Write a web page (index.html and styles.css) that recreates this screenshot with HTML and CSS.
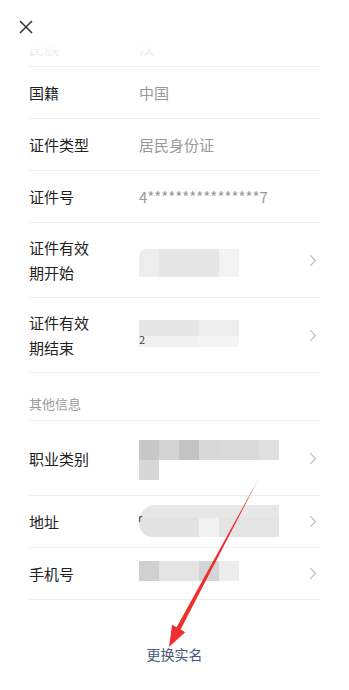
FILE: index.html
```html
<!DOCTYPE html>
<html lang="zh">
<head>
<meta charset="utf-8">
<title>实名信息</title>
<link rel="stylesheet" href="styles.css">
</head>
<body>
<div class="page">
  <div class="list">
    <div class="row ghost"><span class="label">民族</span><span class="value">汉</span></div>
    <div class="row"><span class="label">国籍</span><span class="value">中国</span></div>
    <div class="row"><span class="label">证件类型</span><span class="value">居民身份证</span></div>
    <div class="row"><span class="label">证件号</span><span class="value">4****************7</span></div>
    <div class="row tall">
      <span class="label wrap">证件有效期开始</span>
      <span class="value"><span class="blur b-start"></span></span>
      <svg class="chev" width="8" height="13" viewBox="0 0 8 13"><path d="M1.2 1.2 L6.5 6.5 L1.2 11.8" fill="none" stroke="#bdbdbd" stroke-width="1.2"/></svg>
    </div>
    <div class="row tall">
      <span class="label wrap">证件有效期结束</span>
      <span class="value"><span class="glyph g-two">2</span><span class="blur b-end"></span></span>
      <svg class="chev" width="8" height="13" viewBox="0 0 8 13"><path d="M1.2 1.2 L6.5 6.5 L1.2 11.8" fill="none" stroke="#bdbdbd" stroke-width="1.2"/></svg>
    </div>
    <div class="section">其他信息</div>
    <div class="row tall">
      <span class="label">职业类别</span>
      <span class="value"><span class="blur b-job"></span><span class="blur b-job2"></span></span>
      <svg class="chev" width="8" height="13" viewBox="0 0 8 13"><path d="M1.2 1.2 L6.5 6.5 L1.2 11.8" fill="none" stroke="#bdbdbd" stroke-width="1.2"/></svg>
    </div>
    <div class="row">
      <span class="label">地址</span>
      <span class="value"><span class="glyph g-r">r</span><span class="blur b-addr"></span></span>
      <svg class="chev" width="8" height="13" viewBox="0 0 8 13"><path d="M1.2 1.2 L6.5 6.5 L1.2 11.8" fill="none" stroke="#bdbdbd" stroke-width="1.2"/></svg>
    </div>
    <div class="row">
      <span class="label">手机号</span>
      <span class="value"><span class="blur b-phone"></span></span>
      <svg class="chev" width="8" height="13" viewBox="0 0 8 13"><path d="M1.2 1.2 L6.5 6.5 L1.2 11.8" fill="none" stroke="#bdbdbd" stroke-width="1.2"/></svg>
    </div>
  </div>
  <div class="action">更换实名</div>

  <div class="header">
    <svg class="close" width="14" height="14" viewBox="0 0 14 14"><path d="M1 1 L13 13 M13 1 L1 13" stroke="#333" stroke-width="1.5" fill="none"/></svg>
  </div>

  <svg class="arrow" width="349" height="690" viewBox="0 0 349 690">
    <polygon points="258.5,479 180.6,629.6 185.2,632.3 169,647 172.1,624.8 176.6,627.3" fill="#ee2f2f"/>
  </svg>
</div>
</body>
</html>
```

FILE: styles.css
```css
html, body {
  margin: 0;
  padding: 0;
  background: #fff;
}
body {
  font-family: "Noto Sans CJK SC", "Noto Sans", sans-serif;
}
.page {
  position: relative;
  width: 349px;
  height: 690px;
  padding-top: 15px;
  box-sizing: border-box;
  overflow: hidden;
  background: #fff;
}
.list {
  margin: 0 29px;
}
.row {
  display: flex;
  align-items: center;
  padding: 13px 0;
  border-bottom: 1px solid #eeeeee;
  font-size: 15px;
  line-height: 25px;
}
.row.tall {
  padding: 12px 0;
}
.row.ghost {
  padding: 20px 0 6px;
}
.label {
  flex: none;
  width: 110px;
  color: #222;
  box-sizing: border-box;
}
.label.wrap {
  padding-right: 48px;
}
.ghost .label, .ghost .value {
  color: #ececec;
}
.value {
  flex: 1;
  color: #999;
  display: flex;
  flex-direction: column;
  align-items: flex-start;
  position: relative;
}
.chev {
  flex: none;
  margin-right: 3px;
}
.section {
  padding: 21px 0 6px;
  font-size: 13px;
  line-height: 20px;
  color: #9a9a9a;
  border-bottom: 1px solid #eeeeee;
}
.blur {
  display: block;
  filter: blur(0.6px);
}
.b-start {
  width: 100px;
  height: 28px;
  margin-top: 6px;
  border-radius: 7px 0 0 0;
  background: linear-gradient(90deg, #ededed 0 20%, #e6e6e6 20% 80%, #f3f3f3 80% 100%);
}
.b-end {
  width: 100px;
  height: 27px;
  margin-top: -4px;
  background:
    linear-gradient(180deg, rgba(255,255,255,0) 0 60%, rgba(255,255,255,0.45) 60% 100%),
    linear-gradient(90deg, #e6e6e6 0 60%, #ededed 60% 100%);
}
.glyph {
  position: absolute;
  left: 0;
  color: #444;
  font-size: 11px;
  line-height: 12px;
  z-index: 1;
}
.g-two {
  top: 9px;
}
.g-r {
  top: 2px;
  left: -1px;
}
.b-job {
  width: 140px;
  height: 20px;
  margin-top: 7px;
  background: linear-gradient(90deg,
    #c8c8c8 0 14.3%, #d4d4d4 14.3% 28.6%, #c3c3c3 28.6% 42.9%,
    #d8d8d8 42.9% 57.1%, #dadada 57.1% 85.7%, #dfdfdf 85.7% 100%);
}
.b-job2 {
  width: 20px;
  height: 20px;
  margin-bottom: 3px;
  background: #d6d6d6;
}
.b-addr {
  width: 140px;
  height: 32px;
  margin: -4px 0 -3px;
  border-radius: 16px 0 0 14px;
  background:
    linear-gradient(180deg, #e7e7e7 0 40%, rgba(0,0,0,0) 40% 100%),
    linear-gradient(90deg, #e2e2e2 0 43%, #f2f2f2 43% 57%, #e4e4e4 57% 100%);
}
.b-phone {
  width: 100px;
  height: 20px;
  margin-top: -6px;
  background: linear-gradient(90deg, #d0d0d0 0 20%, #e4e4e4 20% 60%, #d3d4d8 60% 80%, #ececec 80% 100%);
}
.action {
  margin-top: 44px;
  text-align: center;
  font-size: 14px;
  line-height: 20px;
  color: #4c5878;
}
.header {
  position: absolute;
  top: 0;
  left: 0;
  right: 0;
  height: 52px;
  background: linear-gradient(180deg, #fff 0, #fff 46px, rgba(255,255,255,0) 52px);
}
.close {
  position: absolute;
  left: 18.5px;
  top: 20px;
}
.arrow {
  position: absolute;
  top: 0;
  left: 0;
  pointer-events: none;
}
```
